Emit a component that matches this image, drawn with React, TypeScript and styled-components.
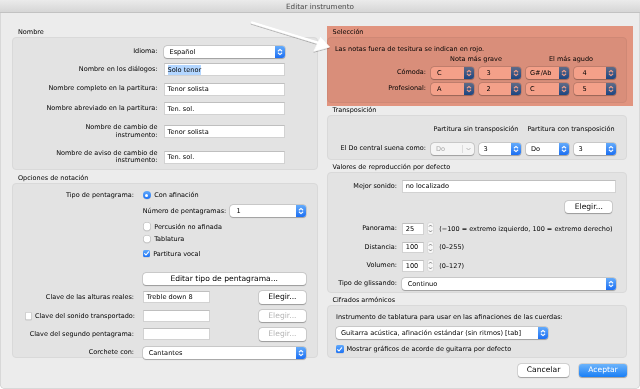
import React from "react";
import styled, { createGlobalStyle } from "styled-components";

const FONT = `"DejaVu Sans", "Noto Sans", Verdana, sans-serif`;

const GlobalStyle = createGlobalStyle`
  html, body { margin: 0; padding: 0; background: #ffffff; }
  body { font-family: ${FONT}; color: #000; }
  *, *::before, *::after { box-sizing: border-box; }
`;

const Window = styled.div`
  position: relative;
  width: 640px;
  height: 389px;
  background: #ececec;
  display: flex;
  flex-direction: column;
  overflow: hidden;
  border-radius: 0 0 5px 5px;
  box-shadow: inset 0 0 0 0.5px #c4c4c4;
`;

const TitleBar = styled.header`
  flex: none;
  height: 13px;
  display: flex;
  align-items: center;
  justify-content: center;
  background: linear-gradient(#ebebeb, #d6d6d6);
  border-bottom: 1px solid #c2c2c2;
  font-size: 7.25px;
  color: #4a4a4a;
`;

const Body = styled.div`
  display: flex;
  gap: 9px;
  padding: 15px 13px 0 12px;
`;

const Column = styled.div<{ $w: number; $gap: number }>`
  flex: none;
  width: ${(p) => p.$w}px;
  display: flex;
  flex-direction: column;
  gap: ${(p) => p.$gap}px;
`;

const Section = styled.section`
  position: relative;
  display: flex;
  flex-direction: column;
`;

const SectionTitle = styled.div<{ $indent?: number }>`
  height: 9px;
  line-height: 9px;
  font-size: 6.5px;
  padding-left: ${(p) => p.$indent ?? 6}px;
  white-space: nowrap;
`;

const Panel = styled.div<{ $h?: number; $pad: string }>`
  background: #e3e3e3;
  border: 1px solid #d9d9d9;
  border-radius: 4px;
  height: ${(p) => (p.$h ? `${p.$h}px` : "auto")};
  padding: ${(p) => p.$pad};
`;

const Highlight = styled.div`
  position: absolute;
  top: -2px;
  bottom: -3px;
  left: 0;
  right: -6px;
  background: #f4a089;
  mix-blend-mode: multiply;
  pointer-events: none;
  z-index: 2;
`;

const FieldLabel = styled.div<{ $top?: boolean }>`
  font-size: 6.5px;
  line-height: ${(p) => (p.$top ? "10px" : "7.5px")};
  align-self: ${(p) => (p.$top ? "start" : "center")};
  text-align: right;
  white-space: nowrap;
`;

const CheckLabel = styled.div`
  display: flex;
  align-items: center;
  justify-content: flex-end;
  gap: 2.7px;
  font-size: 6.5px;
  white-space: nowrap;
  margin-right: -1px;
`;

const TextField = styled.div<{ $w?: number; $h?: number }>`
  width: ${(p) => (p.$w ? `${p.$w}px` : "100%")};
  height: ${(p) => p.$h ?? 13}px;
  display: flex;
  align-items: center;
  padding: 0 3px;
  background: #fff;
  border: 1px solid #d2d2d2;
  border-top-color: #bfbfbf;
  font-size: 6.6px;
  white-space: nowrap;
  overflow: hidden;
`;

const Selected = styled.span`
  background: #b3d6ff;
  padding: 1px 0;
`;

const SelectBox = styled.div<{ $w?: number; $disabled?: boolean }>`
  width: ${(p) => (p.$w ? `${p.$w}px` : "100%")};
  height: 12px;
  display: flex;
  align-items: stretch;
  background: ${(p) => (p.$disabled ? "#f5f5f5" : "#fff")};
  border-radius: 3px;
  box-shadow: 0 0 0 0.5px rgba(0, 0, 0, 0.2), 0 0.6px 1px rgba(0, 0, 0, 0.22);
  font-size: 6.6px;
  color: ${(p) => (p.$disabled ? "#a9a9a9" : "#000")};
`;

const SelectText = styled.span<{ $pad?: number }>`
  flex: 1;
  display: flex;
  align-items: center;
  padding-left: ${(p) => p.$pad ?? 6}px;
  white-space: nowrap;
  overflow: hidden;
`;

const SelectStepper = styled.span`
  flex: none;
  width: 10px;
  border-radius: 0 3px 3px 0;
  background: linear-gradient(#64abfb, #1c6ff3);
  display: flex;
  align-items: center;
  justify-content: center;
`;

const SelectChevron = styled.span`
  flex: none;
  width: 12px;
  margin: 2px 0;
  border-left: 1px solid #dcdcdc;
  display: flex;
  align-items: center;
  justify-content: center;
`;

const PushButton = styled.button<{ $w?: number; $primary?: boolean; $off?: boolean }>`
  width: ${(p) => (p.$w ? `${p.$w}px` : "100%")};
  height: 12.5px;
  padding: 0;
  border: none;
  border-radius: 3px;
  background: ${(p) => (p.$primary ? "linear-gradient(#6db4fb, #197ff6)" : "#fff")};
  box-shadow: 0 0 0 0.5px rgba(0, 0, 0, 0.18), 0 0.6px 1px rgba(0, 0, 0, 0.25);
  font-family: ${FONT};
  font-size: 7.6px;
  line-height: 12.5px;
  color: ${(p) => (p.$primary ? "#fff" : p.$off ? "#b4b4b4" : "#000")};
  white-space: nowrap;
  flex: none;
`;

const RadioDot = styled.span<{ $on?: boolean }>`
  flex: none;
  width: 8.5px;
  height: 8.5px;
  border-radius: 50%;
  background: ${(p) => (p.$on ? "linear-gradient(#62aafb, #1d72f4)" : "#fff")};
  box-shadow: ${(p) =>
    p.$on ? "0 0.5px 0.5px rgba(0,0,0,0.15)" : "inset 0 0 0 0.6px #b0b0b0, 0 0.5px 0.5px rgba(0,0,0,0.12)"};
  display: flex;
  align-items: center;
  justify-content: center;
  &::after {
    content: "";
    display: ${(p) => (p.$on ? "block" : "none")};
    width: 3px;
    height: 3px;
    border-radius: 50%;
    background: #fff;
  }
`;

const CheckSquare = styled.span<{ $on?: boolean }>`
  flex: none;
  width: 7.5px;
  height: 7.5px;
  border-radius: 1.6px;
  background: ${(p) => (p.$on ? "linear-gradient(#62aafb, #1d72f4)" : "#fff")};
  box-shadow: ${(p) =>
    p.$on ? "0 0.5px 0.5px rgba(0,0,0,0.15)" : "inset 0 0 0 0.6px #b0b0b0, 0 0.5px 0.5px rgba(0,0,0,0.12)"};
  display: flex;
  align-items: center;
  justify-content: center;
`;

/* Nombre */
const NameGrid = styled.div`
  display: grid;
  grid-template-columns: 139.5px 121.5px;
  grid-template-rows: 16px 19px 20px 19px 27px 24px;
  column-gap: 6px;
  align-items: center;
`;

/* Opciones de notación */
const OptionsGrid = styled.div`
  display: grid;
  grid-template-columns: 116px 163px;
  column-gap: 8.7px;
  row-gap: 6px;
  align-items: center;
`;

const StaffChoices = styled.div`
  display: flex;
  flex-direction: column;
`;

const ChoiceLine = styled.div<{ $mt?: number }>`
  display: flex;
  align-items: center;
  gap: 3px;
  height: 10px;
  margin-top: ${(p) => p.$mt ?? 0}px;
  font-size: 6.5px;
  white-space: nowrap;
`;

const CountLine = styled.div`
  display: flex;
  align-items: center;
  justify-content: space-between;
  height: 12px;
  margin-top: 4.5px;
  font-size: 6.5px;
  white-space: nowrap;
`;

const EditButtonWrap = styled.div`
  margin-top: 7px;
`;

const ClefControls = styled.div`
  display: flex;
  align-items: center;
  justify-content: space-between;
`;

/* Selección / Transposición */
const PitchGrid = styled.div<{ $rowGap: number }>`
  display: grid;
  grid-template-columns: 91px repeat(4, 42.5px);
  column-gap: 5px;
  row-gap: ${(p) => p.$rowGap}px;
  align-items: center;
`;

const ColHead = styled.div<{ $start: number }>`
  grid-column: ${(p) => p.$start} / span 2;
  text-align: center;
  font-size: 6.5px;
  line-height: 8px;
  white-space: nowrap;
`;

const Note = styled.div<{ $mb?: number }>`
  font-size: 6.5px;
  line-height: 8px;
  white-space: nowrap;
  margin-bottom: ${(p) => p.$mb ?? 0}px;
`;

/* Valores de reproducción */
const PlaybackGrid = styled.div`
  display: grid;
  grid-template-columns: 61px 1fr;
  column-gap: 4.7px;
  row-gap: 5.5px;
  align-items: center;
`;

const ButtonCell = styled.div`
  grid-column: 2;
  display: flex;
  justify-content: flex-end;
  padding: 2.7px 3.7px 3.7px 0;
`;

const NumberCell = styled.div`
  display: flex;
  align-items: center;
  font-size: 6.5px;
  white-space: nowrap;
`;

const NumStepper = styled.span`
  flex: none;
  width: 7px;
  height: 13px;
  margin: 0 5px 0 3px;
  display: flex;
  align-items: center;
  justify-content: center;
`;

/* Cifrados armónicos */
const ChordBody = styled.div`
  display: flex;
  flex-direction: column;
  align-items: flex-start;
  gap: 5.6px;
`;

const Footer = styled.div`
  display: flex;
  justify-content: flex-end;
  gap: 10px;
  padding: 6px 13.3px 0 0;
`;

const ArrowLayer = styled.svg`
  position: absolute;
  left: 0;
  top: 0;
  width: 640px;
  height: 389px;
  pointer-events: none;
  z-index: 3;
`;

const UpDown = ({ color = "#fff" }: { color?: string }) => (
  <svg width="8" height="10" viewBox="0 0 8 10">
    <polyline points="2.2,4 4,2.3 5.8,4" fill="none" stroke={color} strokeWidth="1.05" strokeLinecap="round" strokeLinejoin="round" />
    <polyline points="2.2,6 4,7.7 5.8,6" fill="none" stroke={color} strokeWidth="1.05" strokeLinecap="round" strokeLinejoin="round" />
  </svg>
);

const Select = ({ value, w, pad }: { value: string; w?: number; pad?: number }) => (
  <SelectBox $w={w}>
    <SelectText $pad={pad}>{value}</SelectText>
    <SelectStepper>
      <UpDown />
    </SelectStepper>
  </SelectBox>
);

const DisabledSelect = ({ value, w }: { value: string; w?: number }) => (
  <SelectBox $w={w} $disabled>
    <SelectText $pad={5}>{value}</SelectText>
    <SelectChevron>
      <svg width="7" height="6" viewBox="0 0 7 6">
        <polyline points="1.5,2 3.5,4 5.5,2" fill="none" stroke="#b0b0b0" strokeWidth="0.9" />
      </svg>
    </SelectChevron>
  </SelectBox>
);

const Check = ({ on }: { on?: boolean }) => (
  <CheckSquare $on={on}>
    {on && (
      <svg width="7" height="7" viewBox="0 0 7 7">
        <polyline points="1.6,3.6 3,5 5.6,1.8" fill="none" stroke="#fff" strokeWidth="1.1" strokeLinecap="round" strokeLinejoin="round" />
      </svg>
    )}
  </CheckSquare>
);

const NumberField = ({ value, note }: { value: string; note: string }) => (
  <NumberCell>
    <TextField $w={22.5} $h={11.5}>{value}</TextField>
    <NumStepper>
      <svg width="7" height="13" viewBox="0 0 7 13">
        <rect x="0.5" y="0.5" width="6" height="12" rx="2.5" fill="#f7f7f7" stroke="#c9c9c9" strokeWidth="0.5" />
        <polyline points="2,4.6 3.5,3 5,4.6" fill="none" stroke="#6b6b6b" strokeWidth="0.8" />
        <polyline points="2,8.4 3.5,10 5,8.4" fill="none" stroke="#6b6b6b" strokeWidth="0.8" />
      </svg>
    </NumStepper>
    {note}
  </NumberCell>
);

export default function App() {
  return (
    <>
      <GlobalStyle />
      <Window>
        <TitleBar>Editar instrumento</TitleBar>
        <Body>
          <Column $w={306} $gap={4}>
            <Section>
              <SectionTitle>Nombre</SectionTitle>
              <Panel $pad="6px 0 0 5px">
                <NameGrid>
                  <FieldLabel>Idioma:</FieldLabel>
                  <Select value="Español" />
                  <FieldLabel>Nombre en los diálogos:</FieldLabel>
                  <TextField>
                    <Selected>Solo tenor</Selected>
                  </TextField>
                  <FieldLabel>Nombre completo en la partitura:</FieldLabel>
                  <TextField>Tenor solista</TextField>
                  <FieldLabel>Nombre abreviado en la partitura:</FieldLabel>
                  <TextField>Ten. sol.</TextField>
                  <FieldLabel>
                    Nombre de cambio de
                    <br />
                    instrumento:
                  </FieldLabel>
                  <TextField>Tenor solista</TextField>
                  <FieldLabel>
                    Nombre de aviso de cambio de
                    <br />
                    instrumento:
                  </FieldLabel>
                  <TextField>Ten. sol.</TextField>
                </NameGrid>
              </Panel>
            </Section>
            <Section>
              <SectionTitle>Opciones de notación</SectionTitle>
              <Panel $h={175} $pad="6px 0 0 5px">
                <OptionsGrid>
                  <FieldLabel $top>Tipo de pentagrama:</FieldLabel>
                  <StaffChoices>
                    <ChoiceLine>
                      <RadioDot $on />
                      Con afinación
                    </ChoiceLine>
                    <CountLine>
                      Número de pentagramas:
                      <Select value="1" w={75.3} />
                    </CountLine>
                    <ChoiceLine $mt={5.2}>
                      <RadioDot />
                      Percusión no afinada
                    </ChoiceLine>
                    <ChoiceLine $mt={2.5}>
                      <RadioDot />
                      Tablatura
                    </ChoiceLine>
                    <ChoiceLine $mt={4.5}>
                      <Check on />
                      Partitura vocal
                    </ChoiceLine>
                    <EditButtonWrap>
                      <PushButton>Editar tipo de pentagrama...</PushButton>
                    </EditButtonWrap>
                  </StaffChoices>

                  <FieldLabel>Clave de las alturas reales:</FieldLabel>
                  <ClefControls>
                    <TextField $w={67.3} $h={12}>Treble down 8</TextField>
                    <PushButton $w={46.6}>Elegir...</PushButton>
                  </ClefControls>

                  <CheckLabel>
                    <Check />
                    Clave del sonido transportado:
                  </CheckLabel>
                  <ClefControls>
                    <TextField $w={67.3} $h={12} />
                    <PushButton $w={46.6} $off>
                      Elegir...
                    </PushButton>
                  </ClefControls>

                  <FieldLabel>Clave del segundo pentagrama:</FieldLabel>
                  <ClefControls>
                    <TextField $w={67.3} $h={12} />
                    <PushButton $w={46.6} $off>
                      Elegir...
                    </PushButton>
                  </ClefControls>

                  <FieldLabel>Corchete con:</FieldLabel>
                  <Select value="Cantantes" />
                </OptionsGrid>
              </Panel>
            </Section>
          </Column>

          <Column $w={300} $gap={3}>
            <Section>
              <SectionTitle $indent={5.5}>Selección</SectionTitle>
              <Panel $h={66} $pad="7px 0 0 7px">
                <Note $mb={2}>Las notas fuera de tesitura se indican en rojo.</Note>
                <PitchGrid $rowGap={4}>
                  <ColHead $start={2}>Nota más grave</ColHead>
                  <ColHead $start={4}>El más agudo</ColHead>
                  <FieldLabel>Cómoda:</FieldLabel>
                  <Select value="C" />
                  <Select value="3" pad={8} />
                  <Select value="G#/Ab" pad={4} />
                  <Select value="4" pad={9} />
                  <FieldLabel>Profesional:</FieldLabel>
                  <Select value="A" />
                  <Select value="2" pad={8} />
                  <Select value="C" pad={4} />
                  <Select value="5" pad={9} />
                </PitchGrid>
              </Panel>
              <Highlight />
            </Section>

            <Section>
              <SectionTitle $indent={5.5}>Transposición</SectionTitle>
              <Panel $h={45} $pad="9px 0 0 7px">
                <PitchGrid $rowGap={9.5}>
                  <ColHead $start={2}>Partitura sin transposición</ColHead>
                  <ColHead $start={4}>Partitura con transposición</ColHead>
                  <FieldLabel>El Do central suena como:</FieldLabel>
                  <DisabledSelect value="Do" />
                  <Select value="3" pad={5} />
                  <Select value="Do" pad={5} />
                  <Select value="3" pad={5} />
                </PitchGrid>
              </Panel>
            </Section>

            <Section>
              <SectionTitle $indent={5.5}>Valores de reproducción por defecto</SectionTitle>
              <Panel $h={121} $pad="7px 10px 0 8px">
                <PlaybackGrid>
                  <FieldLabel>Mejor sonido:</FieldLabel>
                  <TextField $h={12.5}>no localizado</TextField>
                  <ButtonCell>
                    <PushButton $w={47}>Elegir...</PushButton>
                  </ButtonCell>
                  <FieldLabel>Panorama:</FieldLabel>
                  <NumberField value="25" note="(−100 = extremo izquierdo, 100 = extremo derecho)" />
                  <FieldLabel>Distancia:</FieldLabel>
                  <NumberField value="100" note="(0–255)" />
                  <FieldLabel>Volumen:</FieldLabel>
                  <NumberField value="100" note="(0–127)" />
                  <FieldLabel>Tipo de glissando:</FieldLabel>
                  <Select value="Continuo" />
                </PlaybackGrid>
              </Panel>
            </Section>

            <Section>
              <SectionTitle $indent={5.5}>Cifrados armónicos</SectionTitle>
              <Panel $h={53.3} $pad="7px 0 0 8px">
                <ChordBody>
                  <Note>Instrumento de tablatura para usar en las afinaciones de las cuerdas:</Note>
                  <Select value="Guitarra acústica, afinación estándar (sin ritmos) [tab]" w={211.7} pad={5} />
                  <ChoiceLine>
                    <Check on />
                    Mostrar gráficos de acorde de guitarra por defecto
                  </ChoiceLine>
                </ChordBody>
              </Panel>
            </Section>
          </Column>
        </Body>
        <Footer>
          <PushButton $w={51.6}>Cancelar</PushButton>
          <PushButton $w={47.4} $primary>
            Aceptar
          </PushButton>
        </Footer>

        <ArrowLayer viewBox="0 0 640 389">
          <defs>
            <filter id="arrowShadow" x="-20%" y="-50%" width="140%" height="200%">
              <feDropShadow dx="0" dy="0.6" stdDeviation="0.7" floodColor="#000" floodOpacity="0.45" />
            </filter>
          </defs>
          <g filter="url(#arrowShadow)" fill="#fff" stroke="#fff">
            <line x1="252" y1="22.5" x2="318" y2="42.8" strokeWidth="2.6" strokeLinecap="round" />
            <polygon points="329.5,47 320.5,37.3 313.8,51.2" strokeWidth="0.8" strokeLinejoin="round" />
          </g>
        </ArrowLayer>
      </Window>
    </>
  );
}
